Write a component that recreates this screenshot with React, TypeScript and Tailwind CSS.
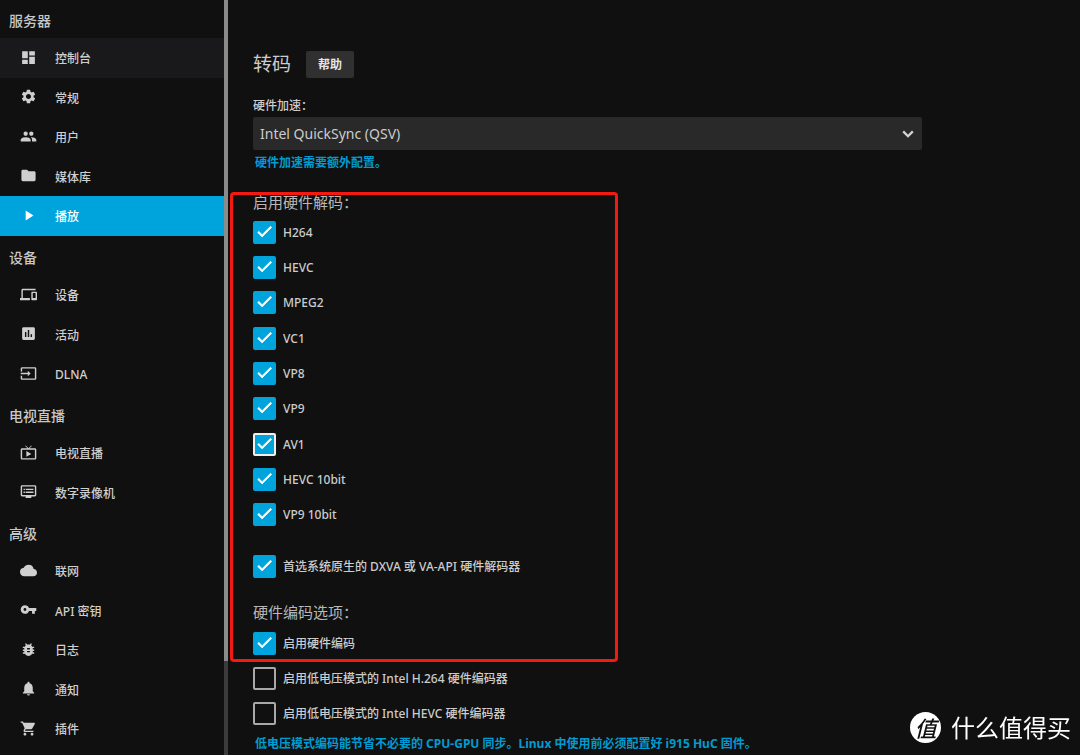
import { useState } from 'react';
import type { IconType } from 'react-icons';
import {
  MdDashboard,
  MdSettings,
  MdPeople,
  MdFolder,
  MdPlayArrow,
  MdDevices,
  MdAssessment,
  MdInput,
  MdLiveTv,
  MdDvr,
  MdCloud,
  MdVpnKey,
  MdBugReport,
  MdNotifications,
  MdShoppingCart,
} from 'react-icons/md';

type NavItem = { label: string; icon: IconType; state?: 'active' | 'hover' };
type NavGroup = { title: string; items: NavItem[] };

const groups: NavGroup[] = [
  {
    title: '服务器',
    items: [
      { label: '控制台', icon: MdDashboard, state: 'hover' },
      { label: '常规', icon: MdSettings },
      { label: '用户', icon: MdPeople },
      { label: '媒体库', icon: MdFolder },
      { label: '播放', icon: MdPlayArrow, state: 'active' },
    ],
  },
  {
    title: '设备',
    items: [
      { label: '设备', icon: MdDevices },
      { label: '活动', icon: MdAssessment },
      { label: 'DLNA', icon: MdInput },
    ],
  },
  {
    title: '电视直播',
    items: [
      { label: '电视直播', icon: MdLiveTv },
      { label: '数字录像机', icon: MdDvr },
    ],
  },
  {
    title: '高级',
    items: [
      { label: '联网', icon: MdCloud },
      { label: 'API 密钥', icon: MdVpnKey },
      { label: '日志', icon: MdBugReport },
      { label: '通知', icon: MdNotifications },
      { label: '插件', icon: MdShoppingCart },
    ],
  },
];

const codecs = ['H264', 'HEVC', 'MPEG2', 'VC1', 'VP8', 'VP9', 'AV1', 'HEVC 10bit', 'VP9 10bit'];

const itemTone = {
  active: 'bg-[#00a4dc] text-white',
  hover: 'bg-[#19191b] text-[#cfcfcf]',
  idle: 'text-[#cfcfcf]',
};

function Sidebar() {
  return (
    <nav className="w-56 shrink-0 overflow-hidden">
      {groups.map((group) => (
        <section key={group.title} className="group">
          <h3 className="flex h-[39px] items-center px-[9px] pt-1 text-sm font-medium text-[#c8c8c8] group-first:h-[38px]">
            {group.title}
          </h3>
          <ul>
            {group.items.map(({ label, icon: Icon, state }) => (
              <li key={label} className="odd:h-10 even:h-[39px]">
                <a
                  href="#"
                  className={`flex h-full items-center gap-[18px] pt-[2px] pl-5 text-xs font-medium ${itemTone[state ?? 'idle']}`}
                >
                  <Icon className="mb-1 size-[17px]" aria-hidden="true" />
                  {label}
                </a>
              </li>
            ))}
          </ul>
        </section>
      ))}
    </nav>
  );
}

function Scrollbar() {
  return (
    <div className="w-1 shrink-0 bg-[#3b3b3b]" aria-hidden="true">
      <div className="h-[661px] bg-[#8b8b8b]" />
    </div>
  );
}

function Checkbox({
  label,
  initial = false,
  highlighted = false,
}: {
  label: string;
  initial?: boolean;
  highlighted?: boolean;
}) {
  const [checked, setChecked] = useState(initial);
  return (
    <label className="flex w-fit items-center gap-[7px] text-xs leading-[23px] font-medium text-[#cccccc]">
      <span className="grid size-[23px] shrink-0">
        <input
          type="checkbox"
          checked={checked}
          onChange={(event) => setChecked(event.target.checked)}
          className={`peer col-start-1 row-start-1 size-[23px] appearance-none rounded-[2px] border-2 checked:bg-[#00a4dc] ${
            highlighted ? 'border-[#f0f0f0]' : 'border-[#a8a8a8] checked:border-[#00a4dc]'
          }`}
        />
        <svg
          viewBox="0 1.4 24 24"
          className="pointer-events-none invisible col-start-1 row-start-1 m-[2px] size-[19px] fill-white stroke-white peer-checked:visible"
          aria-hidden="true"
        >
          <path d="M9 16.17 4.83 12l-1.42 1.41L9 19 21 7l-1.41-1.41z" strokeWidth="0.9" />
        </svg>
      </span>
      {label}
    </label>
  );
}

function Watermark() {
  return (
    <div className="fixed right-[9px] bottom-3 flex items-center gap-[10px] text-white">
      <span className="flex size-[31px] items-center justify-center rounded-full bg-white text-[22px] leading-none font-medium text-[#101010] italic">
        值
      </span>
      <span className="text-2xl leading-[31px]">什么值得买</span>
    </div>
  );
}

export default function App() {
  return (
    <div
      lang="zh-CN"
      className="flex h-screen overflow-hidden bg-[#101010] font-['Noto_Sans','Noto_Sans_CJK_SC',sans-serif] text-[#cccccc]"
    >
      <Sidebar />
      <Scrollbar />
      <main className="min-w-0 flex-1 overflow-hidden pt-[50px] pl-[25px]">
        <form className="w-full max-w-[669px]">
          <div className="flex items-center gap-[15px]">
            <h2 className="text-[19px] leading-7">转码</h2>
            <button
              type="button"
              className="h-[27px] rounded-[2px] bg-[#303030] px-3 pt-px text-xs font-bold text-[#e6e6e6]"
            >
              帮助
            </button>
          </div>

          <label htmlFor="acceleration" className="mt-[17px] block text-xs leading-[22px] font-medium">
            硬件加速：
          </label>
          <div className="grid items-center">
            <select
              id="acceleration"
              defaultValue="qsv"
              className="col-start-1 row-start-1 h-[33px] w-full appearance-none rounded-[2px] bg-[#292929] px-[7px] text-sm text-[#cccccc]"
            >
              <option value="none">无</option>
              <option value="qsv">Intel QuickSync (QSV)</option>
            </select>
            <svg
              viewBox="0 0 12 8"
              className="pointer-events-none col-start-1 row-start-1 mr-2 h-2 w-3 justify-self-end fill-none stroke-[#d4d4d4] stroke-[2.3]"
              aria-hidden="true"
            >
              <path d="M1.2 1.4 6 6.2 10.8 1.4" />
            </svg>
          </div>
          <a href="#" className="block w-fit pt-[3px] pl-[2px] text-xs leading-5 font-bold text-[#009bd1]">
            硬件加速需要额外配置。
          </a>

          <div className="relative mt-[19px] pb-[7px]">
            <div
              className="pointer-events-none absolute inset-y-0 -left-[23px] w-[388px] rounded-[4px] border-[3px] border-[#f51a11]"
              aria-hidden="true"
            />
            <h3 className="text-[15px] leading-5 text-[#b8b8b8]">启用硬件解码：</h3>
            <ul className="mt-[9px]">
              {codecs.map((codec) => (
                <li key={codec} className="h-[35px] nth-[3n]:h-9">
                  <Checkbox label={codec} initial highlighted={codec === 'AV1'} />
                </li>
              ))}
            </ul>
            <div className="mt-4">
              <Checkbox label="首选系统原生的 DXVA 或 VA-API 硬件解码器" initial />
            </div>
            <h3 className="mt-6 mb-[10px] text-[15px] leading-5 text-[#b8b8b8]">硬件编码选项：</h3>
            <Checkbox label="启用硬件编码" initial />
          </div>
          <div className="mt-[5px] flex flex-col gap-3">
            <Checkbox label="启用低电压模式的 Intel H.264 硬件编码器" />
            <Checkbox label="启用低电压模式的 Intel HEVC 硬件编码器" />
          </div>
          <a href="#" className="mt-[9px] block w-fit pl-[2px] text-xs leading-5 font-bold text-[#009bd1]">
            低电压模式编码能节省不必要的 CPU-GPU 同步。Linux 中使用前必须配置好 i915 HuC 固件。
          </a>
        </form>
      </main>
      <Watermark />
    </div>
  );
}
